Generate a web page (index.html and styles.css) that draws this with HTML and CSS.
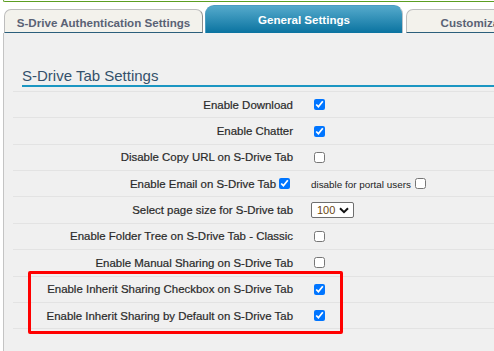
FILE: index.html
```html
<!DOCTYPE html>
<html>
<head>
<meta charset="utf-8">
<link rel="stylesheet" href="styles.css">
</head>
<body>
<div class="topbox"></div>
<div class="tabs">
  <div class="tab">S-Drive Authentication Settings</div>
  <div class="tab active">General Settings</div>
  <div class="tab">Customization Settings</div>
</div>
<div class="panel">
  <h2 class="heading">S-Drive Tab Settings</h2>
  <div class="rows">
    <div class="row"><div class="label">Enable Download</div><div class="data"><input type="checkbox" checked></div></div>
    <div class="row"><div class="label">Enable Chatter</div><div class="data"><input type="checkbox" checked></div></div>
    <div class="row"><div class="label">Disable Copy URL on S-Drive Tab</div><div class="data"><input type="checkbox"></div></div>
    <div class="row row-base"><div class="label">Enable Email on S-Drive Tab<input class="inline-check" type="checkbox" checked></div><div class="data"><span class="note">disable for portal users</span><input class="note-check" type="checkbox"></div></div>
    <div class="row"><div class="label">Select page size for S-Drive tab</div><div class="data"><span class="select"><span class="select-text">100</span><svg class="chev" width="10" height="7" viewBox="0 0 10 7"><path d="M1 1.2 L5 5.2 L9 1.2" fill="none" stroke="#111" stroke-width="2"/></svg></span></div></div>
    <div class="row"><div class="label">Enable Folder Tree on S-Drive Tab - Classic</div><div class="data"><input type="checkbox"></div></div>
    <div class="row"><div class="label">Enable Manual Sharing on S-Drive Tab</div><div class="data"><input type="checkbox"></div></div>
    <div class="row"><div class="label">Enable Inherit Sharing Checkbox on S-Drive Tab</div><div class="data"><input type="checkbox" checked></div></div>
    <div class="row"><div class="label">Enable Inherit Sharing by Default on S-Drive Tab</div><div class="data"><input type="checkbox" checked></div></div>
  </div>
  <div class="highlight"></div>
</div>
</body>
</html>
```
FILE: styles.css
```css
html, body {
  margin: 0;
  padding: 0;
  overflow: hidden;
}
body {
  width: 494px;
  height: 351px;
  background: #ffffff;
  font-family: "Liberation Sans", Arial, sans-serif;
}
.topbox {
  height: 1px;
  margin-left: 3px;
  border-left: 1px solid #5c9e22;
  border-bottom: 1px solid #5c9e22;
  border-bottom-left-radius: 2px;
}
.tabs {
  display: flex;
  align-items: flex-end;
  height: 31px;
  padding-left: 4px;
  white-space: nowrap;
}
.tab {
  flex: none;
  box-sizing: border-box;
  width: 199px;
  height: 24px;
  display: flex;
  align-items: center;
  justify-content: center;
  padding-top: 2px;
  background: #f3f2ec;
  border: 1px solid #bdbdbd;
  border-right-color: #8f8f8f;
  border-bottom: 1px solid #2b5f7c;
  border-radius: 7px 7px 0 0;
  color: #5a6275;
  font-weight: bold;
  font-size: 11.6px;
  overflow: hidden;
}
.tab.active {
  width: 198px;
  height: 28px;
  margin-left: 2px;
  padding-top: 0;
  background: linear-gradient(#55aacc, #0a73a0);
  border: 1px solid #4b9cc0;
  border-bottom: none;
  border-right-color: #b9c2c8;
  border-radius: 9px 9px 0 0;
  color: #ffffff;
}
.tab.active + .tab {
  width: 198px;
  margin-left: 3px;
}
.panel {
  position: relative;
  height: 318px;
  margin-left: 3px;
  border-left: 1px solid #c4c4c4;
  background: #f0f0f0;
}
.heading {
  margin: 0 0 0 18px;
  padding: 34px 0 1px 0;
  font-size: 15px;
  line-height: 17px;
  font-weight: normal;
  color: #34506b;
  border-bottom: 2px solid #1b96c2;
}
.rows {
  margin: 4px 0 0 9px;
  border-bottom: 1px solid #e3e3e3;
}
.row {
  display: grid;
  grid-template-columns: 280px 1fr;
  align-items: center;
  box-sizing: border-box;
  height: 26.37px;
  border-top: 1px solid #e3e3e3;
}
.label {
  text-align: right;
  font-size: 11.45px;
  font-weight: normal;
  color: #2a2a2a;
  -webkit-text-stroke: 0.2px #2a2a2a;
  white-space: nowrap;
}
.data {
  display: flex;
  align-items: center;
  padding-left: 17px;
}
input[type="checkbox"] {
  width: 11px;
  height: 11px;
  margin: 0 0 0 4px;
}
.row-base {
  align-items: end;
  padding-bottom: 6px;
}
.row-base .data {
  align-items: flex-end;
}
.inline-check {
  margin: 0 3px 0 3px !important;
  vertical-align: -1px;
}
.note {
  font-size: 9.9px;
  color: #222;
  margin-left: 1px;
}
.note-check {
  margin-bottom: 1px !important;
}
.select {
  display: inline-flex;
  align-items: center;
  box-sizing: border-box;
  width: 43px;
  height: 16px;
  margin-left: 1px;
  padding: 0 4px 0 5px;
  justify-content: space-between;
  background: #ffffff;
  border: 1px solid #6e6e6e;
  border-radius: 2px;
}
.select-text {
  font-size: 11px;
  color: #6a4511;
}
.highlight {
  position: absolute;
  left: 24px;
  top: 238px;
  width: 315px;
  height: 63px;
  box-sizing: border-box;
  border: 3px solid #ff0000;
  border-radius: 2px;
}
```
